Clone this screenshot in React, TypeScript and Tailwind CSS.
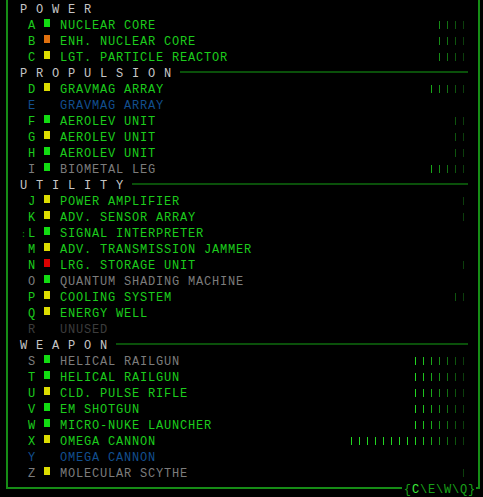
type Tone = "ok" | "gray" | "blue" | "off";

type Row =
  | { head: string }
  | { k: string; name: string; tone: Tone; sq?: string; bars?: number; mark?: boolean };

const rows: Row[] = [
  { head: "Power" },
  { k: "A", name: "Nuclear Core", tone: "ok", sq: "bg-[#12dc12]", bars: 4 },
  { k: "B", name: "Enh. Nuclear Core", tone: "ok", sq: "bg-[#e0700e]", bars: 4 },
  { k: "C", name: "Lgt. Particle Reactor", tone: "ok", sq: "bg-[#dcdc00]", bars: 4 },
  { head: "Propulsion" },
  { k: "D", name: "Gravmag Array", tone: "ok", sq: "bg-[#dcdc00]", bars: 5 },
  { k: "E", name: "Gravmag Array", tone: "blue" },
  { k: "F", name: "Aerolev Unit", tone: "ok", sq: "bg-[#12dc12]", bars: 2 },
  { k: "G", name: "Aerolev Unit", tone: "ok", sq: "bg-[#dcdc00]", bars: 2 },
  { k: "H", name: "Aerolev Unit", tone: "ok", sq: "bg-[#12dc12]", bars: 2 },
  { k: "I", name: "Biometal Leg", tone: "gray", sq: "bg-[#12dc12]", bars: 5 },
  { head: "Utility" },
  { k: "J", name: "Power Amplifier", tone: "ok", sq: "bg-[#dcdc00]", bars: 1 },
  { k: "K", name: "Adv. Sensor Array", tone: "ok", sq: "bg-[#dcdc00]", bars: 1 },
  { k: "L", name: "Signal Interpreter", tone: "ok", sq: "bg-[#12dc12]", mark: true },
  { k: "M", name: "Adv. Transmission Jammer", tone: "ok", sq: "bg-[#dcdc00]" },
  { k: "N", name: "Lrg. Storage Unit", tone: "ok", sq: "bg-[#dc0000]", bars: 1 },
  { k: "O", name: "Quantum Shading Machine", tone: "gray", sq: "bg-[#12dc12]" },
  { k: "P", name: "Cooling System", tone: "ok", sq: "bg-[#dcdc00]", bars: 2 },
  { k: "Q", name: "Energy Well", tone: "ok", sq: "bg-[#dcdc00]" },
  { k: "R", name: "Unused", tone: "off" },
  { head: "Weapon" },
  { k: "S", name: "Helical Railgun", tone: "gray", sq: "bg-[#12dc12]", bars: 7 },
  { k: "T", name: "Helical Railgun", tone: "ok", sq: "bg-[#12dc12]", bars: 7 },
  { k: "U", name: "Cld. Pulse Rifle", tone: "ok", sq: "bg-[#dcdc00]", bars: 7 },
  { k: "V", name: "EM Shotgun", tone: "ok", sq: "bg-[#12dc12]", bars: 7 },
  { k: "W", name: "Micro-nuke Launcher", tone: "ok", sq: "bg-[#12dc12]", bars: 7 },
  { k: "X", name: "Omega Cannon", tone: "ok", sq: "bg-[#dcdc00]", bars: 15 },
  { k: "Y", name: "Omega Cannon", tone: "blue" },
  { k: "Z", name: "Molecular Scythe", tone: "gray", sq: "bg-[#dcdc00]", bars: 1 },
];

const toneText: Record<Tone, string> = {
  ok: "text-[#1ccc1c]",
  gray: "text-[#7c7c7c]",
  blue: "text-[#124e8e]",
  off: "text-[#3c3c3c]",
};

// brightness of a bar depends on how far it sits from the right edge
const barShade = [
  "bg-[#0c3e0c]",
  "bg-[#0e540e]",
  "bg-[#127012]",
  "bg-[#168c16]",
  "bg-[#1aa81a]",
  "bg-[#1ec21e]",
  "bg-[#22d622]",
];

function Bars({ n }: { n: number }) {
  return (
    <div className="flex mt-[2px]">
      {Array.from({ length: n }, (_, i) => {
        const fromRight = n - 1 - i;
        const shade = barShade[Math.min(fromRight, barShade.length - 1)];
        return (
          <div key={i} className="w-[8px] h-[8px]">
            <div className={`ml-[3px] w-[1px] h-[8px] ${shade}`} />
          </div>
        );
      })}
    </div>
  );
}

function Header({ title }: { title: string }) {
  const letters = title.toUpperCase().split("");
  const first = title === "Power";
  return (
    <div className="flex h-[16px] pl-[12px] pr-[10px] pt-[3px] items-start">
      {letters.map((c, i) => (
        <span key={i} className="w-[16px] leading-[14px] text-[#c6c6c6]">
          {c}
        </span>
      ))}
      {!first && <div className="flex-1 h-[2px] mt-[4px] bg-[#0a500a]" />}
    </div>
  );
}

function Item({ row }: { row: Extract<Row, { k: string }> }) {
  const tone = toneText[row.tone];
  return (
    <div className="flex h-[16px] pl-[12px] pr-[10px] pt-[3px] items-start">
      <span className="w-[8px] flex justify-end">
        {row.mark && (
          <span className="text-[9px] leading-[9px] mt-[4px] mr-[1px] text-[#0c8c0c]">:</span>
        )}
      </span>
      <span className={`w-[16px] leading-[14px] ${tone}`}>{row.k}</span>
      <span className="w-[16px]">
        {row.sq && <div className={`w-[6px] h-[8px] ${row.sq}`} />}
      </span>
      <span className={`flex-1 uppercase leading-[14px] ${tone}`}>{row.name}</span>
      {row.bars ? <Bars n={row.bars} /> : null}
    </div>
  );
}

export default function App() {
  return (
    <div className="w-[483px] h-[497px] bg-black overflow-hidden font-['Liberation_Mono','DejaVu_Sans_Mono',monospace] text-[12px] tracking-[0.8px]">
      <div className="relative ml-[6px] w-[474px] h-[489px] border-x-2 border-b-2 border-[#168c16]">
        <div className="flex flex-col">
          {rows.map((r, i) =>
            "head" in r ? <Header key={i} title={r.head} /> : <Item key={i} row={r} />
          )}
        </div>
        <div className="absolute right-[2px] bottom-[-9px] h-[16px] flex bg-black pl-[2px] pt-[3px] leading-[14px] text-[#18a018]">
          <span>{"{"}</span>
          <span className="text-[#3cec3c]">C</span>
          <span>{"\\"}</span>
          <span>E</span>
          <span>{"\\"}</span>
          <span>W</span>
          <span>{"\\"}</span>
          <span>Q</span>
          <span>{"}"}</span>
        </div>
      </div>
    </div>
  );
}
